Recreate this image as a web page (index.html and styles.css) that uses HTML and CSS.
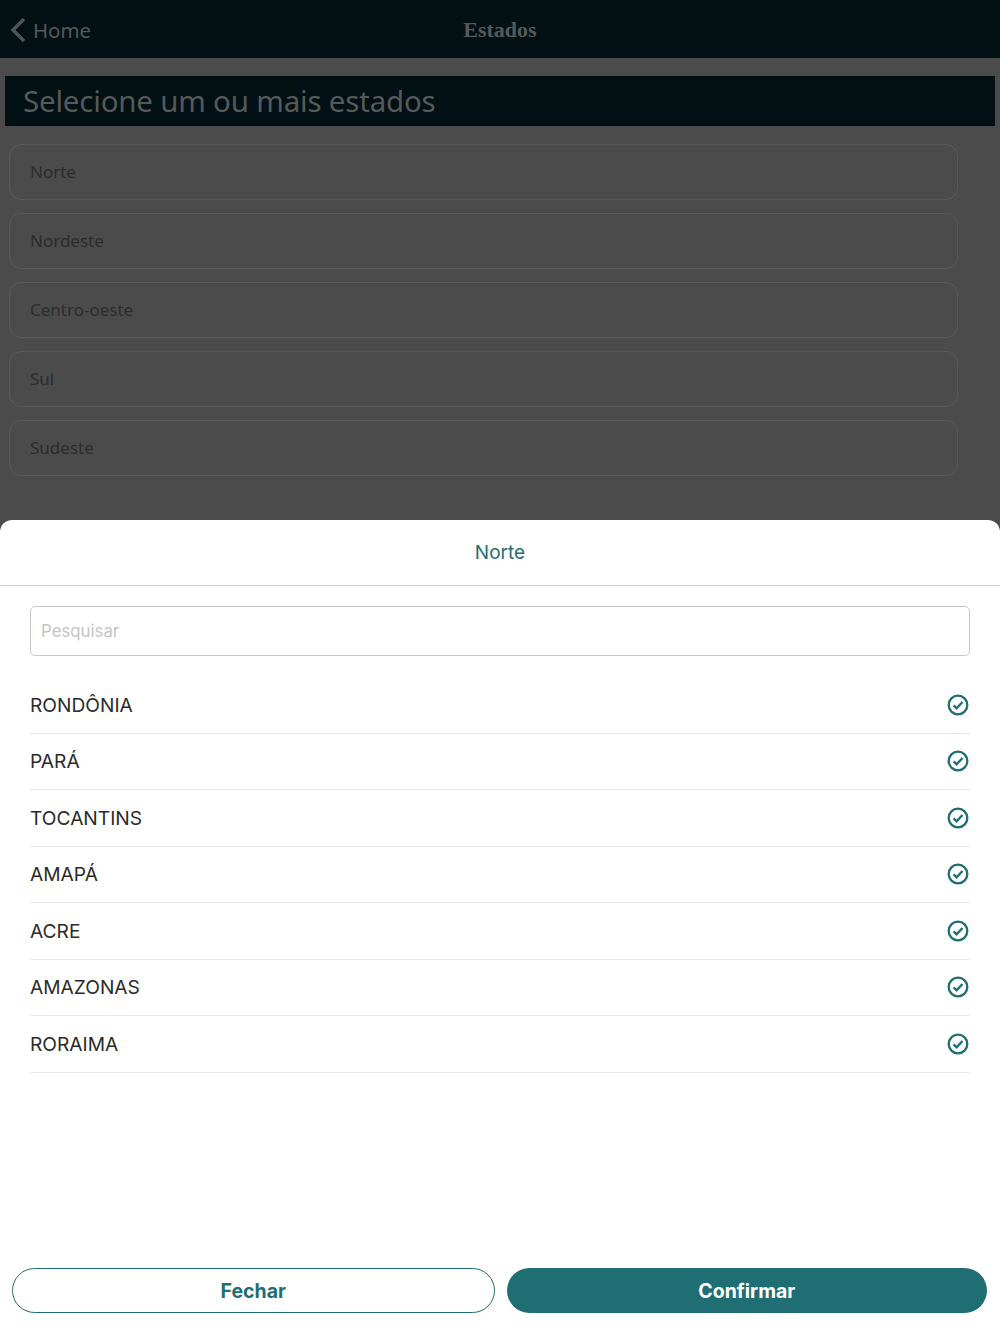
FILE: index.html
```html
<!DOCTYPE html>
<html lang="pt-BR">
<head>
<meta charset="utf-8">
<title>Estados</title>
<link rel="stylesheet" href="styles.css">
</head>
<body>
<div class="page">
  <header class="nav">
    <div class="nav-back">
      <svg class="chev" width="16" height="26" viewBox="0 0 16 26"><path d="M14 2 3 13l11 11" fill="none" stroke="#4f5556" stroke-width="3.4"/></svg>
      <span>Home</span>
    </div>
    <div class="nav-title">Estados</div>
  </header>
  <h1 class="title">Selecione um ou mais estados</h1>
  <div class="regions">
    <div class="region">Norte</div>
    <div class="region">Nordeste</div>
    <div class="region">Centro-oeste</div>
    <div class="region">Sul</div>
    <div class="region">Sudeste</div>
  </div>
  <section class="sheet">
    <div class="sheet-head">Norte</div>
    <div class="sheet-body">
      <div class="search">Pesquisar</div>
      <ul class="list">
        <li class="item"><span>RONDÔNIA</span><svg class="check" viewBox="0 0 22 22"><circle cx="11" cy="11" r="9.3"/><path d="M6.6 11.4l3 3 5.9-6.4"/></svg></li>
        <li class="item"><span>PARÁ</span><svg class="check" viewBox="0 0 22 22"><circle cx="11" cy="11" r="9.3"/><path d="M6.6 11.4l3 3 5.9-6.4"/></svg></li>
        <li class="item"><span>TOCANTINS</span><svg class="check" viewBox="0 0 22 22"><circle cx="11" cy="11" r="9.3"/><path d="M6.6 11.4l3 3 5.9-6.4"/></svg></li>
        <li class="item"><span>AMAPÁ</span><svg class="check" viewBox="0 0 22 22"><circle cx="11" cy="11" r="9.3"/><path d="M6.6 11.4l3 3 5.9-6.4"/></svg></li>
        <li class="item"><span>ACRE</span><svg class="check" viewBox="0 0 22 22"><circle cx="11" cy="11" r="9.3"/><path d="M6.6 11.4l3 3 5.9-6.4"/></svg></li>
        <li class="item"><span>AMAZONAS</span><svg class="check" viewBox="0 0 22 22"><circle cx="11" cy="11" r="9.3"/><path d="M6.6 11.4l3 3 5.9-6.4"/></svg></li>
        <li class="item"><span>RORAIMA</span><svg class="check" viewBox="0 0 22 22"><circle cx="11" cy="11" r="9.3"/><path d="M6.6 11.4l3 3 5.9-6.4"/></svg></li>
      </ul>
    </div>
    <div class="actions">
      <button class="btn btn-outline">Fechar</button>
      <button class="btn btn-solid">Confirmar</button>
    </div>
  </section>
</div>
</body>
</html>
```
FILE: styles.css
```css
* { box-sizing: border-box; }
html, body { margin: 0; padding: 0; }
body { background: #4b4b4b; font-family: "Noto Sans", sans-serif; }
.page { position: relative; width: 1000px; height: 1334px; overflow: hidden; background: #4b4b4b; }
.nav { position: relative; height: 59px; background: #021014; display: flex; align-items: center; justify-content: center; padding-top: 2px; border-bottom: 1px solid #454a4b; }
.nav-back { position: absolute; left: 10px; top: 17px; display: flex; align-items: center; gap: 7px; color: #55595a; font-size: 20.4px; line-height: 26px; }
.chev { display: block; }
.nav-title { color: #55595a; font-family: "Liberation Serif", serif; font-weight: 700; font-size: 22px; }
.title { margin: 17px 5px 0; height: 50px; padding-left: 18px; background: #021014; color: #55595a; font-size: 29.5px; font-weight: 400; line-height: 50px; letter-spacing: -0.2px; }
.regions { display: flex; flex-direction: column; gap: 13px; margin: 18px 42px 0 9px; }
.region { height: 56px; padding-left: 20px; border: 1.5px solid #595959; border-radius: 12px; color: #2c2c2c; font-size: 17px; line-height: 54px; }
.sheet { position: absolute; left: 0; right: 0; bottom: 0; height: 814px; background: #fff; border-radius: 12px 12px 0 0; display: flex; flex-direction: column; font-family: Inter, sans-serif; }
.sheet-head { height: 66px; border-bottom: 1.5px solid #cfcfcf; color: #1f6e73; font-size: 19px; text-align: center; line-height: 65px; }
.sheet-body { flex: 1; padding: 20px 30px 0; }
.search { height: 50px; border: 1.5px solid #c9c9c9; border-radius: 5px; padding-left: 10px; color: #c4c4c4; font-size: 16.8px; line-height: 49px; }
.list { list-style: none; margin: 21.1px 0 0; padding: 0; }
.item { height: 56.5px; display: flex; align-items: center; justify-content: space-between; border-bottom: 1px solid #e6e6e6; color: #2b2b2b; font-size: 19.2px; padding-right: 1px; }
.check { width: 22px; height: 22px; fill: none; stroke: #1f6e73; stroke-width: 2.3; }
.actions { display: flex; gap: 12px; padding: 0 13px 21px 12px; }
.btn { flex: 1; height: 45px; border-radius: 23px; font-family: Inter, sans-serif; font-size: 19.5px; font-weight: 700; }
.btn-outline { border: 1.5px solid #1f6e73; background: #fff; color: #1f6e73; }
.btn-solid { border: 0; background: #1f6e73; color: #fff; }
```
